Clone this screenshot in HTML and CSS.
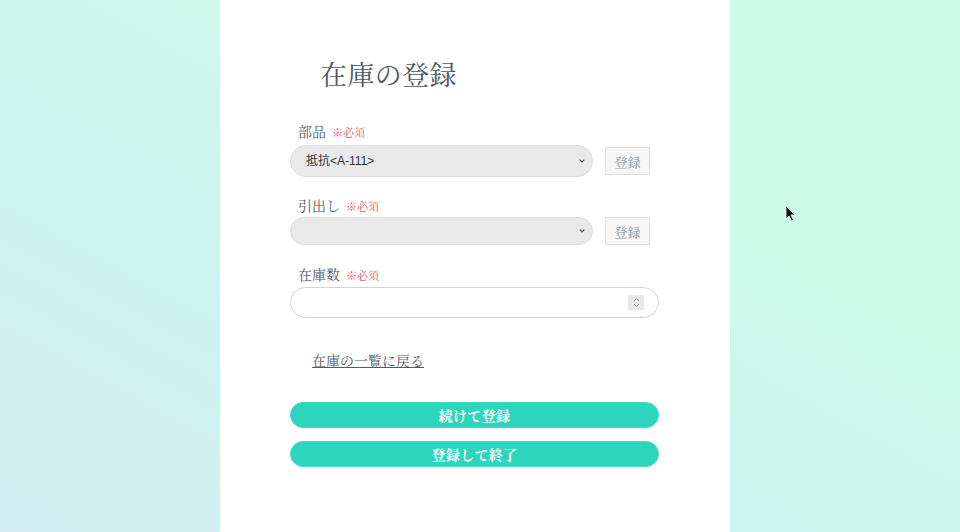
FILE: index.html
```html
<!DOCTYPE html>
<html lang="ja">
<head>
<meta charset="utf-8">
<title>在庫の登録</title>
<link rel="stylesheet" href="styles.css">
</head>
<body>
<main class="card">
  <h1 class="title">在庫の登録</h1>
  <form class="form">
    <div class="label label-first">部品<span class="req">※必須</span></div>
    <div class="row row-first">
      <select class="select select-tall"><option>抵抗&lt;A-111&gt;</option></select>
      <button type="button" class="mini">登録</button>
    </div>
    <div class="label">引出し<span class="req">※必須</span></div>
    <div class="row row-second">
      <select class="select select-short"><option></option></select>
      <button type="button" class="mini">登録</button>
    </div>
    <div class="label label-third">在庫数<span class="req">※必須</span></div>
    <div class="number">
      <span class="spin">
        <svg width="9" height="11" viewBox="0 0 9 11"><path d="M2 4 L4.5 1.5 L7 4 M2 7 L4.5 9.5 L7 7" fill="none" stroke="#8a8f96" stroke-width="1"/></svg>
      </span>
    </div>
    <a class="back" href="#">在庫の一覧に戻る</a>
    <button type="button" class="primary primary-first">続けて登録</button>
    <button type="button" class="primary">登録して終了</button>
  </form>
</main>
<svg class="cursor" width="12" height="18" viewBox="0 0 12 18"><path d="M1 1 L1 14 L4 11 L6.5 16 L8.5 15 L6 10 L10 10 Z" fill="#111" stroke="#fff" stroke-width="0.8"/></svg>
</body>
</html>
```
FILE: styles.css
```css
html, body {
  margin: 0;
  padding: 0;
}
body {
  width: 960px;
  height: 532px;
  overflow: hidden;
  position: relative;
  background: linear-gradient(to top right, #d4eef3 0%, #cbf6ec 45%, #cbfae8 70%, #cdfbe9 100%);
  font-family: "Noto Serif CJK JP", "Liberation Serif", "Noto Sans CJK JP", serif;
  color: #555b63;
}
.card {
  margin-left: 220px;
  width: 510px;
  height: 532px;
  background: #fff;
  box-sizing: border-box;
  padding-top: 56px;
}
.title {
  margin: 0 0 0 100px;
  font-weight: normal;
  font-size: 27px;
  line-height: 36px;
  color: #4f5763;
  letter-spacing: 0.4px;
}
.form {
  margin-left: 70px;
  width: 369px;
  display: flex;
  flex-direction: column;
}
.label {
  font-size: 14px;
  line-height: 18px;
  height: 18px;
  padding-left: 8px;
  margin-top: 19px;
  color: #555b63;
}
.label-first {
  margin-top: 30px;
}
.label-third {
  margin-top: 20px;
}
.req {
  font-size: 11px;
  color: #de5a6a;
  margin-left: 6px;
}
.row {
  display: flex;
  align-items: center;
  gap: 12px;
}
.row-first {
  margin-top: 5px;
}
.row-second {
  margin-top: 3px;
}
.select {
  appearance: none;
  -webkit-appearance: none;
  width: 303px;
  margin: 0;
  border: 1px solid #dcdcdc;
  border-radius: 16px;
  background-color: #e9e9ea;
  background-image: url("data:image/svg+xml,%3Csvg xmlns='http://www.w3.org/2000/svg' width='6' height='4' viewBox='0 0 6 4'%3E%3Cpath d='M0.7 0.7 L3 3 L5.3 0.7' fill='none' stroke='%23555' stroke-width='1.2'/%3E%3C/svg%3E");
  background-repeat: no-repeat;
  background-position: right 7px center;
  font-family: "Liberation Sans", "Noto Sans CJK JP", sans-serif;
  font-size: 12px;
  color: #333;
  padding: 0 0 0 15px;
  box-sizing: border-box;
}
.select-tall {
  height: 32px;
}
.select-short {
  height: 28px;
}
.mini {
  width: 45px;
  height: 28px;
  margin: 0;
  padding: 0;
  border: 1px solid #dddddd;
  background: #f6f6f6;
  color: #8d939a;
  font-family: inherit;
  font-size: 13px;
  box-sizing: border-box;
}
.number {
  margin-top: 4px;
  height: 31px;
  box-sizing: border-box;
  border: 1px solid #d3d3d3;
  border-radius: 16px;
  background: #fff;
  display: flex;
  align-items: center;
  justify-content: flex-end;
  padding-right: 14px;
}
.spin {
  width: 16px;
  height: 15px;
  background: #e8e8e8;
  display: flex;
  align-items: center;
  justify-content: center;
}
.back {
  margin-top: 33px;
  margin-left: 22px;
  align-self: flex-start;
  font-size: 14px;
  line-height: 18px;
  color: #555b63;
  text-decoration: underline;
}
.primary {
  margin: 13px 0 0 0;
  height: 26px;
  border: 1px solid #4ad8c4;
  border-radius: 13px;
  background: #2ed5bd;
  color: #fff;
  font-family: inherit;
  font-size: 14px;
  font-weight: bold;
  letter-spacing: 0.3px;
  padding: 0;
}
.primary-first {
  margin-top: 33px;
}
.cursor {
  position: absolute;
  left: 785px;
  top: 205px;
}
```
